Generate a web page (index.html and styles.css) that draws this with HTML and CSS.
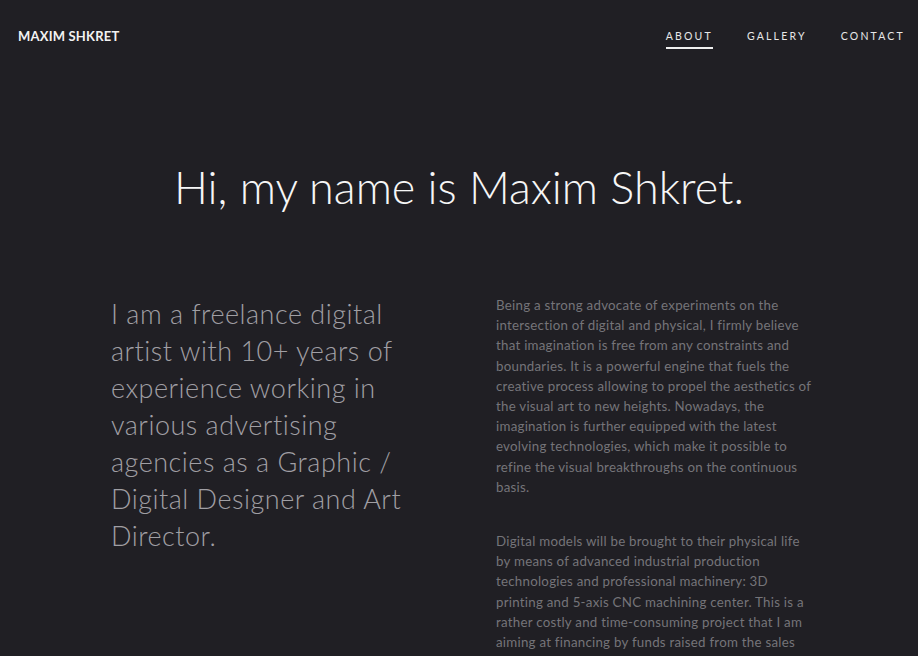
FILE: index.html
```html
<!DOCTYPE html>
<html lang="en">
<head>
    <meta charset="UTF-8">
    <meta name="viewport" content="width=device-width, initial-scale=1.0">
    <title>Maxim Shkret - About</title>
    <link rel="stylesheet" href="styles.css">
</head>
<body>
    <header class="site-header">
        <a class="logo" href="#">MAXIM SHKRET</a>
        <nav class="main-nav">
            <a class="nav-link active" href="#">ABOUT</a>
            <a class="nav-link" href="#">GALLERY</a>
            <a class="nav-link" href="#">CONTACT</a>
        </nav>
    </header>

    <main class="about">
        <h1 class="about-title">Hi, my name is Maxim Shkret.</h1>

        <div class="about-columns">
            <p class="intro">
                I am a freelance digital<br>
                artist with 10+ years of<br>
                experience working in<br>
                various advertising<br>
                agencies as a Graphic /<br>
                Digital Designer and Art<br>
                Director.
            </p>
            <div class="story">
                <p>
                    Being a strong advocate of experiments on the<br>
                    intersection of digital and physical, I firmly believe<br>
                    that imagination is free from any constraints and<br>
                    boundaries. It is a powerful engine that fuels the<br>
                    creative process allowing to propel the aesthetics of<br>
                    the visual art to new heights. Nowadays, the<br>
                    imagination is further equipped with the latest<br>
                    evolving technologies, which make it possible to<br>
                    refine the visual breakthroughs on the continuous<br>
                    basis.
                </p>
                <p>
                    Digital models will be brought to their physical life<br>
                    by means of advanced industrial production<br>
                    technologies and professional machinery: 3D<br>
                    printing and 5-axis CNC machining center. This is a<br>
                    rather costly and time-consuming project that I am<br>
                    aiming at financing by funds raised from the sales
                </p>
            </div>
        </div>
    </main>
</body>
</html>
```

FILE: styles.css
```css
body {
    margin: 0;
    background-color: #201f24;
    color: #ffffff;
    font-family: Lato, "Open Sans", sans-serif;
    overflow: hidden;
}
a {
    color: inherit;
    text-decoration: none;
}
.site-header {
    display: flex;
    justify-content: space-between;
    align-items: center;
    height: 71px;
    padding: 0 13px 0 18px;
}
.logo {
    font-size: 13px;
    font-weight: 700;
    letter-spacing: 0.2px;
    color: #f2f2f2;
}
.main-nav {
    display: flex;
    gap: 34px;
}
.nav-link {
    position: relative;
    font-size: 10.5px;
    letter-spacing: 2.2px;
    color: #e8e8e8;
}
.nav-link.active::after {
    content: "";
    position: absolute;
    left: 0;
    right: 0;
    bottom: -7px;
    height: 2px;
    background-color: #f0f0f0;
}
.about {
    padding-top: 88px;
}
.about-title {
    margin: 0;
    text-align: center;
    font-size: 45px;
    font-weight: 300;
    line-height: 56px;
    color: #f6f6f6;
}
.about-columns {
    display: grid;
    grid-template-columns: 385px 1fr;
    padding: 80px 0 0 111px;
}
.intro {
    margin: 0;
    font-size: 27px;
    font-weight: 300;
    letter-spacing: 0.5px;
    line-height: 37px;
    color: #a09fa4;
    white-space: nowrap;
}
.story p {
    margin: 0 0 34px;
    font-size: 13.3px;
    letter-spacing: 0.25px;
    line-height: 20.2px;
    color: #757479;
    white-space: nowrap;
}
```
